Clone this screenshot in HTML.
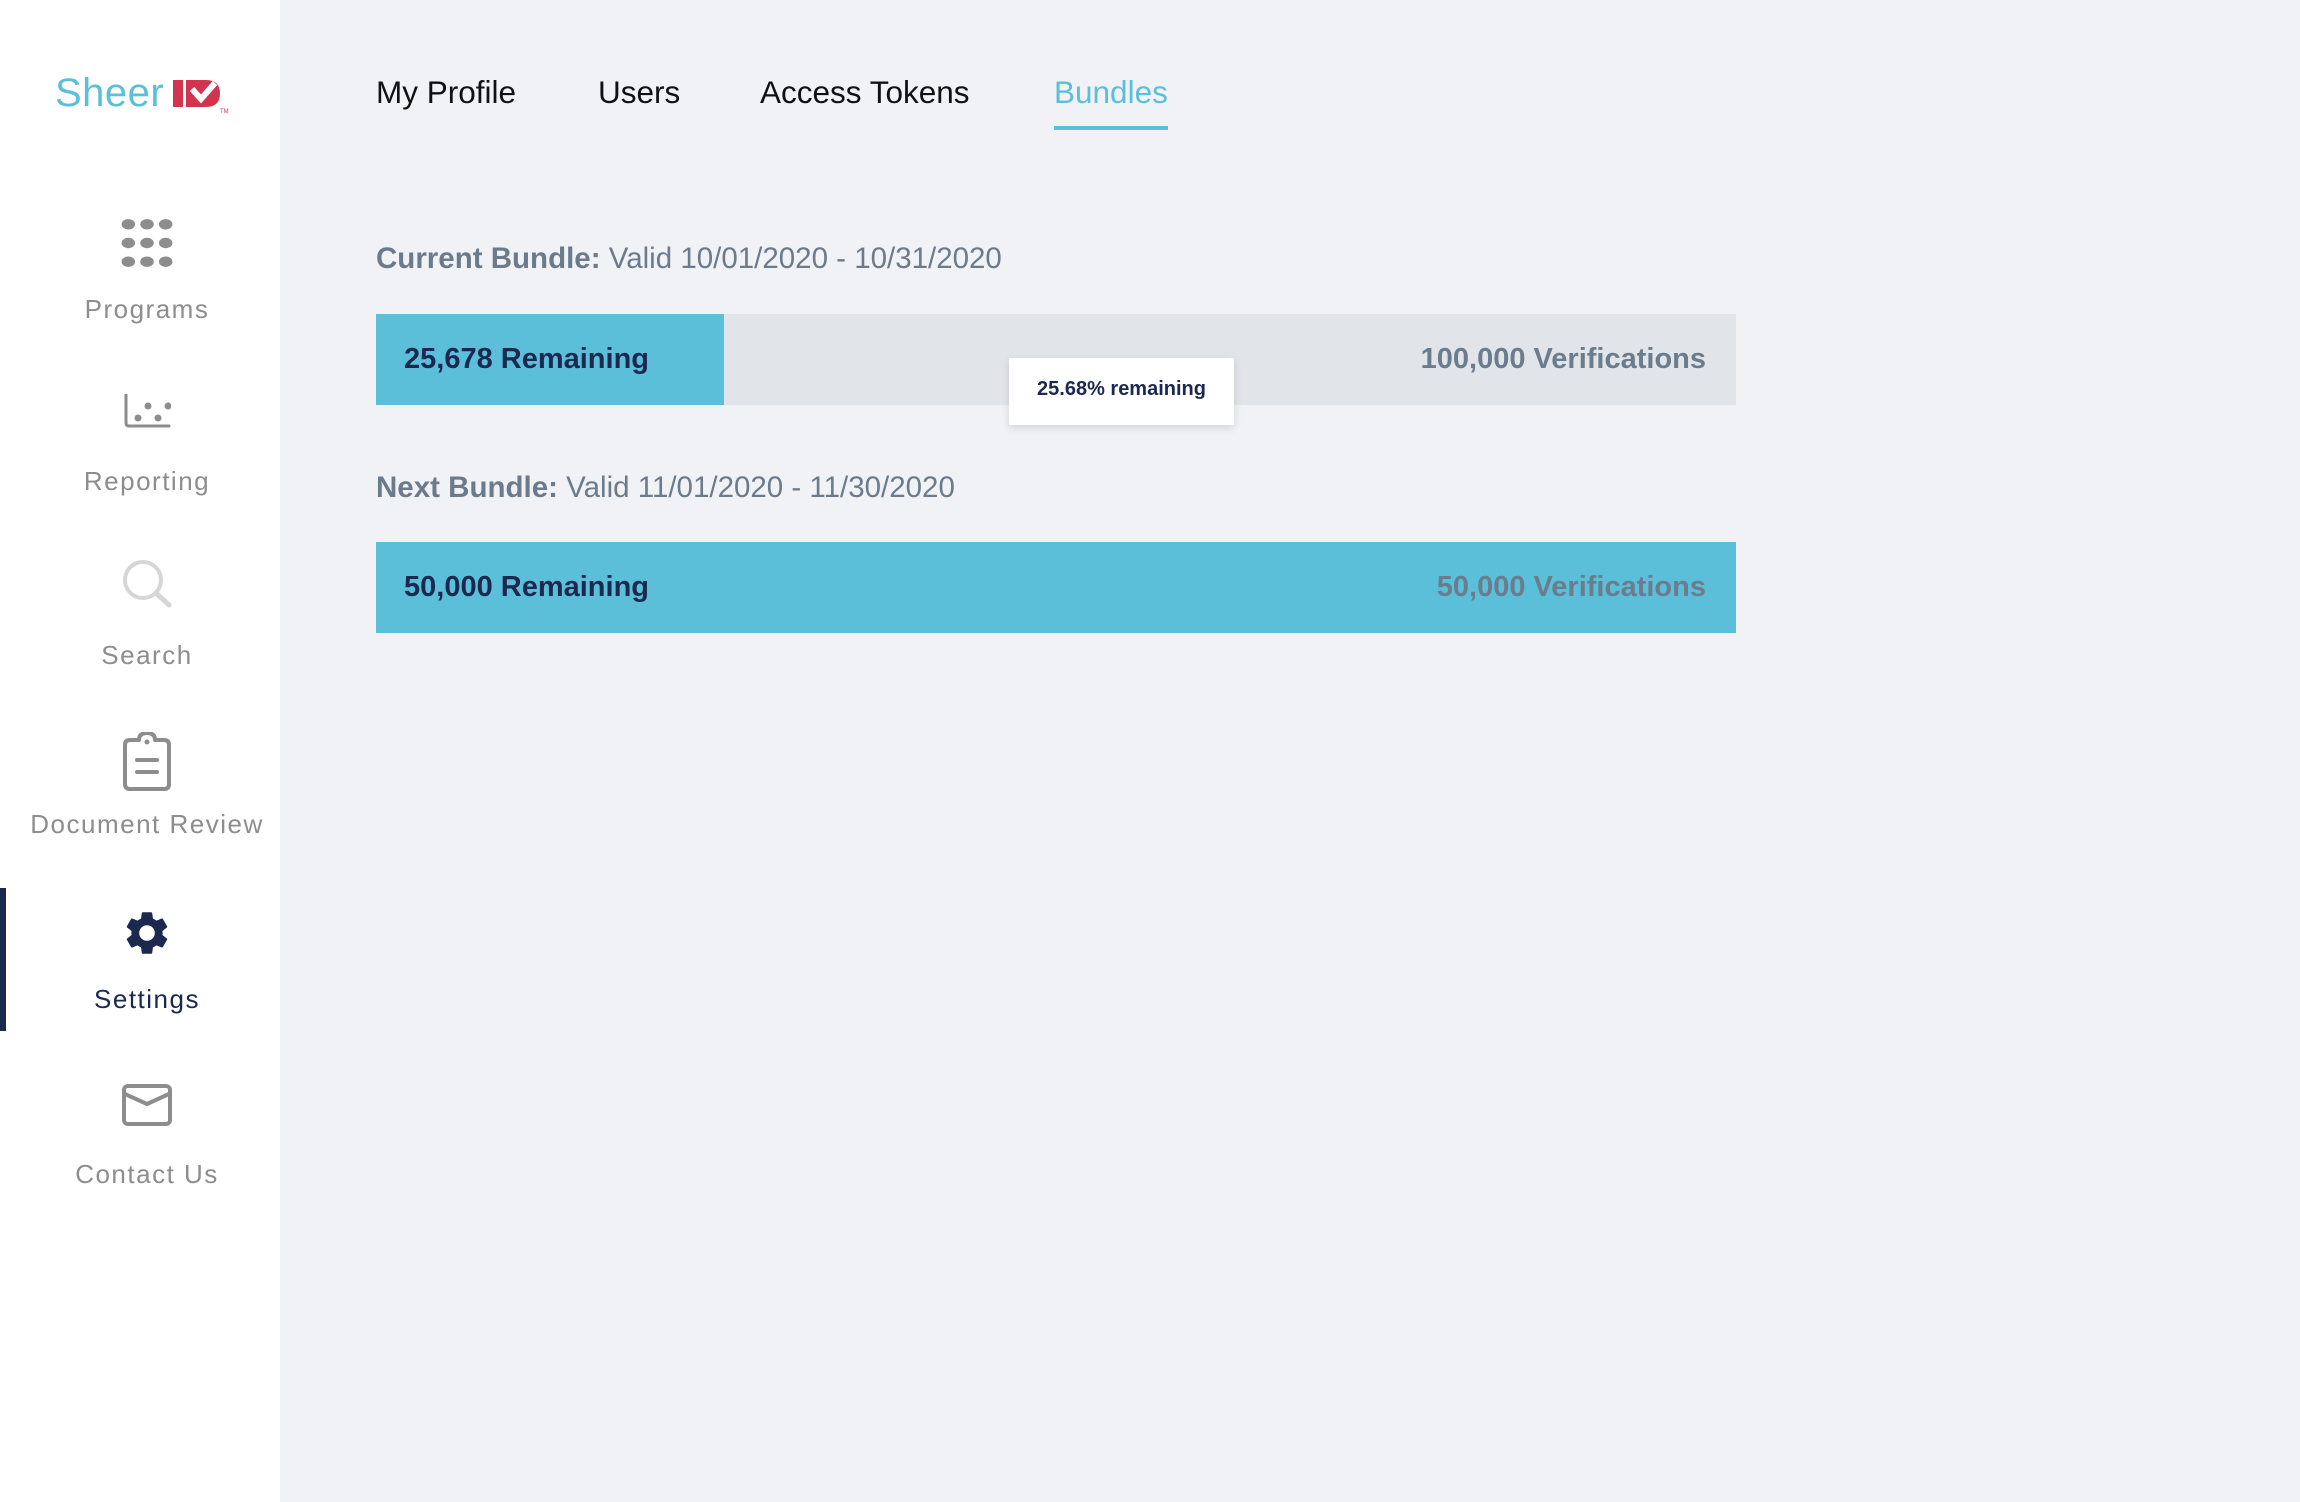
<!DOCTYPE html>
<html><head><meta charset="utf-8"><style>
*{margin:0;padding:0;box-sizing:border-box}
body{width:2300px;height:1502px;background:#f1f2f6;font-family:"Liberation Sans",Arial,sans-serif;position:relative;overflow:hidden}
.side{position:absolute;left:0;top:0;width:280px;height:1502px;background:#fff}
.logo{position:absolute;left:55px;top:72px;height:42px}
.logo .s{position:absolute;left:0;top:0;color:#5bbfda;font-size:40px;line-height:42px;letter-spacing:0.5px}
.logo svg{position:absolute;left:118px;top:8px}
.item{position:absolute;left:0;width:294px;text-align:center;color:#8d8d8d;font-size:26px;letter-spacing:1.5px}
.item svg{position:absolute;left:50%;transform:translateX(-50%)}
.lab{position:absolute;left:0;width:294px;text-align:center}
.tab{position:absolute;top:74px;font-size:31.5px;color:#111}
.label{position:absolute;left:376px;font-size:29.5px;color:#6b7b8b}
.bar{position:absolute;left:376px;width:1360px;height:91px;background:#e1e4e9}
.fill{position:absolute;left:0;top:0;height:100%;background:#5bbfda}
.bar .l{position:absolute;left:28px;top:29px;font-size:29px;font-weight:bold;color:#1b2850}
.bar .r{position:absolute;right:30px;top:29px;font-size:29px;font-weight:bold;color:#6b7d8c}
.tip{position:absolute;left:1009px;top:358px;width:225px;height:67px;background:#fff;box-shadow:0 3px 8px rgba(0,0,0,.12);font-size:20px;font-weight:bold;color:#1b2850;text-align:center;line-height:62px}
</style></head><body>
<div class="side">
  <div class="logo"><span class="s">Sheer</span>
    <svg width="60" height="36" viewBox="0 0 60 36">
      <rect x="0" y="0" width="10" height="27" fill="#d1344c"/>
      <path d="M13 0 H33 Q47 0 47 13.5 Q47 27 33 27 H13 Z" fill="#d1344c"/>
      <path d="M19 9 L28 19 L42 3" stroke="#fff" stroke-width="6" fill="none"/>
      <text x="47" y="33" font-size="6" fill="#d1344c" font-family="Liberation Sans">TM</text>
    </svg>
  </div>

  <div class="item" style="top:216px;height:120px">
    <svg width="54" height="54" viewBox="0 0 52 52" style="top:0">
      <g fill="#8d8d8d"><ellipse cx="8" cy="8" rx="6.5" ry="5"/><ellipse cx="26" cy="8" rx="6.5" ry="5"/><ellipse cx="44" cy="8" rx="6.5" ry="5"/>
      <ellipse cx="8" cy="26" rx="6.5" ry="5"/><ellipse cx="26" cy="26" rx="6.5" ry="5"/><ellipse cx="44" cy="26" rx="6.5" ry="5"/>
      <ellipse cx="8" cy="44" rx="6.5" ry="5"/><ellipse cx="26" cy="44" rx="6.5" ry="5"/><ellipse cx="44" cy="44" rx="6.5" ry="5"/></g></svg>
    <div class="lab" style="top:78px">Programs</div>
  </div>

  <div class="item" style="top:394px;height:120px">
    <svg width="48" height="34" viewBox="0 0 48 34" style="top:0">
      <path d="M3 1 V29 Q3 32 6 32 H46" stroke="#8d8d8d" stroke-width="3" fill="none" stroke-linecap="round"/>
      <g fill="#8d8d8d"><circle cx="15" cy="24" r="3.5"/><circle cx="25" cy="12" r="3.5"/><circle cx="35" cy="24" r="3.5"/><circle cx="45" cy="12" r="3.5"/></g></svg>
    <div class="lab" style="top:72px">Reporting</div>
  </div>

  <div class="item" style="top:560px;height:120px">
    <svg width="52" height="52" viewBox="0 0 52 52" style="top:0">
      <circle cx="22" cy="20" r="18" stroke="#d6d6d6" stroke-width="4" fill="none"/>
      <path d="M35 33 L48 45" stroke="#d6d6d6" stroke-width="5" stroke-linecap="round"/></svg>
    <div class="lab" style="top:80px">Search</div>
  </div>

  <div class="item" style="top:732px;height:120px">
    <svg width="50" height="60" viewBox="0 0 50 60" style="top:0">
      <path d="M17 8 H8 Q3 8 3 13 V52 Q3 57 8 57 H42 Q47 57 47 52 V13 Q47 8 42 8 H33 Q33 1 25 1 Q17 1 17 8 Z" stroke="#8d8d8d" stroke-width="4" fill="none" stroke-linejoin="round"/>
      <circle cx="25" cy="10" r="2.5" fill="#8d8d8d"/>
      <path d="M15 28 H35 M15 40 H35" stroke="#8d8d8d" stroke-width="4" stroke-linecap="round"/></svg>
    <div class="lab" style="top:77px">Document Review</div>
  </div>

  <div style="position:absolute;left:0;top:888px;width:6px;height:143px;background:#1b2850"></div>
  <div class="item" style="top:908px;height:120px;color:#1b2850">
    <svg width="52" height="52" viewBox="0 0 24 24" style="top:-1px">
      <path fill="#1b2850" d="M19.14 12.94c.04-.3.06-.61.06-.94s-.02-.64-.07-.94l2.03-1.58a.49.49 0 0 0 .12-.61l-1.92-3.32a.49.49 0 0 0-.59-.22l-2.39.96c-.5-.38-1.03-.7-1.62-.94l-.36-2.54A.48.48 0 0 0 13.92 2.4h-3.84a.48.48 0 0 0-.48.41l-.36 2.54c-.59.24-1.13.57-1.62.94l-2.39-.96a.48.48 0 0 0-.59.22L2.72 8.87a.48.48 0 0 0 .12.61l2.03 1.58c-.05.3-.07.62-.07.94s.02.64.07.94l-2.03 1.58a.49.49 0 0 0-.12.61l1.92 3.32c.12.22.37.29.59.22l2.39-.96c.5.38 1.03.7 1.62.94l.36 2.54c.05.24.24.41.48.41h3.84c.24 0 .44-.17.47-.41l.36-2.54c.59-.24 1.13-.56 1.62-.94l2.39.96c.22.08.47 0 .59-.22l1.92-3.32a.48.48 0 0 0-.12-.61zM12 15.6A3.6 3.6 0 1 1 12 8.4a3.6 3.6 0 0 1 0 7.2z"/></svg>
    <div class="lab" style="top:76px">Settings</div>
  </div>

  <div class="item" style="top:1084px;height:120px">
    <svg width="50" height="42" viewBox="0 0 50 42" style="top:0">
      <rect x="2" y="2" width="46" height="38" rx="4" stroke="#8d8d8d" stroke-width="4" fill="none"/>
      <path d="M3 10 L25 20 L47 10" stroke="#8d8d8d" stroke-width="4" fill="none" stroke-linejoin="round"/></svg>
    <div class="lab" style="top:75px">Contact Us</div>
  </div>
</div>

<div class="tab" style="left:376px">My Profile</div>
<div class="tab" style="left:598px">Users</div>
<div class="tab" style="left:760px">Access Tokens</div>
<div class="tab" style="left:1054px;color:#5bbfda">Bundles</div>
<div style="position:absolute;left:1054px;top:126px;width:114px;height:4px;background:#5bbfda"></div>

<div class="label" style="top:242px"><b>Current Bundle:</b> Valid 10/01/2020 - 10/31/2020</div>
<div class="bar" style="top:314px"><div class="fill" style="width:348px"></div><div class="l">25,678 Remaining</div><div class="r">100,000 Verifications</div></div>
<div class="tip">25.68% remaining</div>

<div class="label" style="top:471px"><b>Next Bundle:</b> Valid 11/01/2020 - 11/30/2020</div>
<div class="bar" style="top:542px"><div class="fill" style="width:100%"></div><div class="l">50,000 Remaining</div><div class="r">50,000 Verifications</div></div>
</body></html>
